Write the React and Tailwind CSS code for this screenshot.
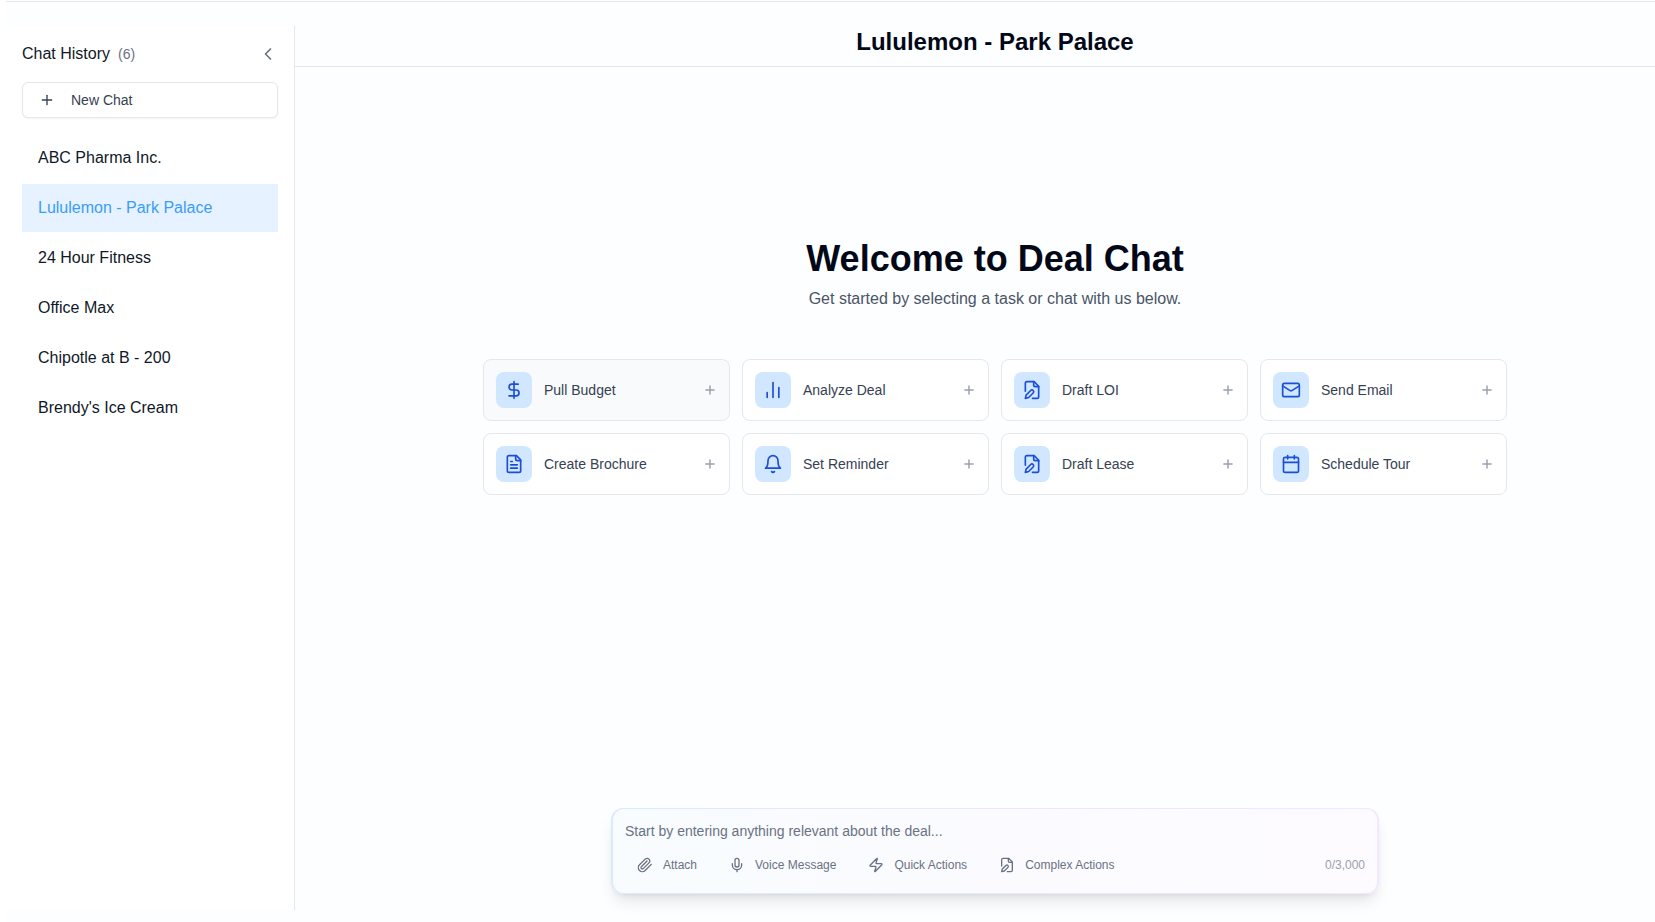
import { Calendar, ChartNoAxesColumn, ChevronLeft, DollarSign, Mic, Plus, Zap } from 'lucide-react';

function Glyph({ className, children }) {
  return (
    <svg
      viewBox="0 0 24 24"
      fill="none"
      stroke="currentColor"
      strokeWidth="2"
      strokeLinecap="round"
      strokeLinejoin="round"
      className={className}
      aria-hidden="true"
    >
      {children}
    </svg>
  );
}

function FilePen({ className }) {
  return (
    <Glyph className={className}>
      <path d="M4 13.5V4a2 2 0 0 1 2-2h8.5L20 7.5V20a2 2 0 0 1-2 2h-5.5" />
      <path d="M14 2v4a2 2 0 0 0 2 2h4" />
      <path d="M10.42 12.61a2.1 2.1 0 1 1 2.97 2.97L7.95 21 4 22l.99-3.95 5.43-5.44Z" />
    </Glyph>
  );
}

function FileLines({ className }) {
  return (
    <Glyph className={className}>
      <path d="M15 2H6a2 2 0 0 0-2 2v16a2 2 0 0 0 2 2h12a2 2 0 0 0 2-2V7Z" />
      <path d="M14 2v4a2 2 0 0 0 2 2h4" />
      <path d="M10 9H8M16 13H8M16 17H8" />
    </Glyph>
  );
}

function BellIcon({ className }) {
  return (
    <Glyph className={className}>
      <path d="M6 8a6 6 0 0 1 12 0c0 7 3 9 3 9H3s3-2 3-9" />
      <path d="M10.3 21a1.94 1.94 0 0 0 3.4 0" />
    </Glyph>
  );
}

function Envelope({ className }) {
  return (
    <Glyph className={className}>
      <rect width="20" height="16" x="2" y="4" rx="2" />
      <path d="m22 7-8.97 5.7a1.94 1.94 0 0 1-2.06 0L2 7" />
    </Glyph>
  );
}

function Clip({ className }) {
  return (
    <Glyph className={className}>
      <path d="m21.44 11.05-9.19 9.19a6 6 0 0 1-8.49-8.49l8.57-8.57A4 4 0 1 1 18 8.84l-8.59 8.57a2 2 0 0 1-2.83-2.83l8.49-8.48" />
    </Glyph>
  );
}

const chats = [
  'ABC Pharma Inc.',
  'Lululemon - Park Palace',
  '24 Hour Fitness',
  'Office Max',
  'Chipotle at B - 200',
  "Brendy's Ice Cream",
];
const activeChat = 'Lululemon - Park Palace';

const tasks = [
  { label: 'Pull Budget', icon: DollarSign, highlighted: true },
  { label: 'Analyze Deal', icon: ChartNoAxesColumn },
  { label: 'Draft LOI', icon: FilePen },
  { label: 'Send Email', icon: Envelope },
  { label: 'Create Brochure', icon: FileLines },
  { label: 'Set Reminder', icon: BellIcon },
  { label: 'Draft Lease', icon: FilePen },
  { label: 'Schedule Tour', icon: Calendar },
];

const tools = [
  { label: 'Attach', icon: Clip },
  { label: 'Voice Message', icon: Mic },
  { label: 'Quick Actions', icon: Zap },
  { label: 'Complex Actions', icon: FilePen },
];

function Sidebar() {
  return (
    <aside className="flex w-[289px] shrink-0 flex-col border-r border-gray-200 bg-white px-4 pt-4">
      <div className="flex h-6 items-center justify-between">
        <h2 className="flex items-center gap-2 text-base text-gray-900">
          Chat History <span className="text-sm text-gray-500">(6)</span>
        </h2>
        <button type="button" aria-label="Collapse chat history" className="text-gray-500">
          <ChevronLeft className="size-5" />
        </button>
      </div>
      <button
        type="button"
        className="mt-4 flex h-9 w-full items-center gap-4 rounded-md border border-gray-200 bg-white px-4 text-sm text-gray-700 shadow-xs"
      >
        <Plus className="size-4" />
        New Chat
      </button>
      <nav className="mt-4 flex flex-col gap-0.5">
        {chats.map((chat) => (
          <a
            key={chat}
            href="#"
            className={
              chat === activeChat
                ? 'flex h-12 items-center bg-[#e6f2ff] px-4 text-base text-[#3b9df8]'
                : 'flex h-12 items-center px-4 text-base text-gray-900'
            }
          >
            {chat}
          </a>
        ))}
      </nav>
    </aside>
  );
}

function TaskCard({ label, icon: Icon, highlighted }) {
  return (
    <button
      type="button"
      className={
        highlighted
          ? 'flex items-center gap-3 rounded-lg border border-gray-200 bg-gray-50 p-3 text-left'
          : 'flex items-center gap-3 rounded-lg border border-gray-200 bg-white p-3 text-left'
      }
    >
      <span className="flex size-9 items-center justify-center rounded-lg bg-[#d0e7ff] text-[#1d4ed8]">
        <Icon className="size-5" />
      </span>
      <span className="flex-1 text-sm text-gray-700">{label}</span>
      <Plus className="size-3.5 text-gray-400" strokeWidth={2.5} />
    </button>
  );
}

function Composer() {
  return (
    <div className="w-full max-w-3xl rounded-xl bg-linear-to-r from-blue-100 to-purple-100 px-0.5 py-px shadow-lg">
      <div className="rounded-[11px] bg-linear-to-r from-[#f8fcff] via-[#fbfbff] to-[#fdfbff] px-3 py-2.5">
        <input
          type="text"
          aria-label="Message"
          placeholder="Start by entering anything relevant about the deal..."
          className="block h-6 w-full bg-transparent text-sm text-gray-900 outline-none placeholder:text-gray-500"
        />
        <div className="mt-1 flex h-9 items-center justify-between">
          <div className="flex gap-2">
            {tools.map(({ label, icon: Icon }) => (
              <button
                key={label}
                type="button"
                className="flex h-9 items-center gap-2.5 px-3 text-xs text-gray-500"
              >
                <Icon className="size-4" />
                {label}
              </button>
            ))}
          </div>
          <span className="text-xs text-gray-400">0/3,000</span>
        </div>
      </div>
    </div>
  );
}

export default function App() {
  return (
    <div className="flex h-screen flex-col overflow-hidden bg-white pt-px pl-1.5 font-['Liberation_Sans',Arial,sans-serif]">
      <div className="flex min-h-0 flex-1 border-t border-gray-200 bg-[#fdfeff] pt-6 pb-3">
        <Sidebar />
        <main className="flex min-w-0 flex-1 flex-col">
          <header className="flex h-[41px] shrink-0 items-start justify-center border-b border-gray-200 pl-10">
            <h1 className="text-2xl font-bold text-[#020817]">Lululemon - Park Palace</h1>
          </header>
          <section className="flex flex-1 flex-col items-center pt-[172px] pl-10">
            <h2 className="text-4xl font-bold text-[#020817]">Welcome to Deal Chat</h2>
            <p className="mt-2 text-base text-gray-600">
              Get started by selecting a task or chat with us below.
            </p>
            <div className="mt-12 grid w-full max-w-5xl grid-cols-4 gap-3">
              {tasks.map((task) => (
                <TaskCard key={task.label} {...task} />
              ))}
            </div>
          </section>
          <footer className="flex justify-center pb-4 pl-10">
            <Composer />
          </footer>
        </main>
      </div>
    </div>
  );
}
